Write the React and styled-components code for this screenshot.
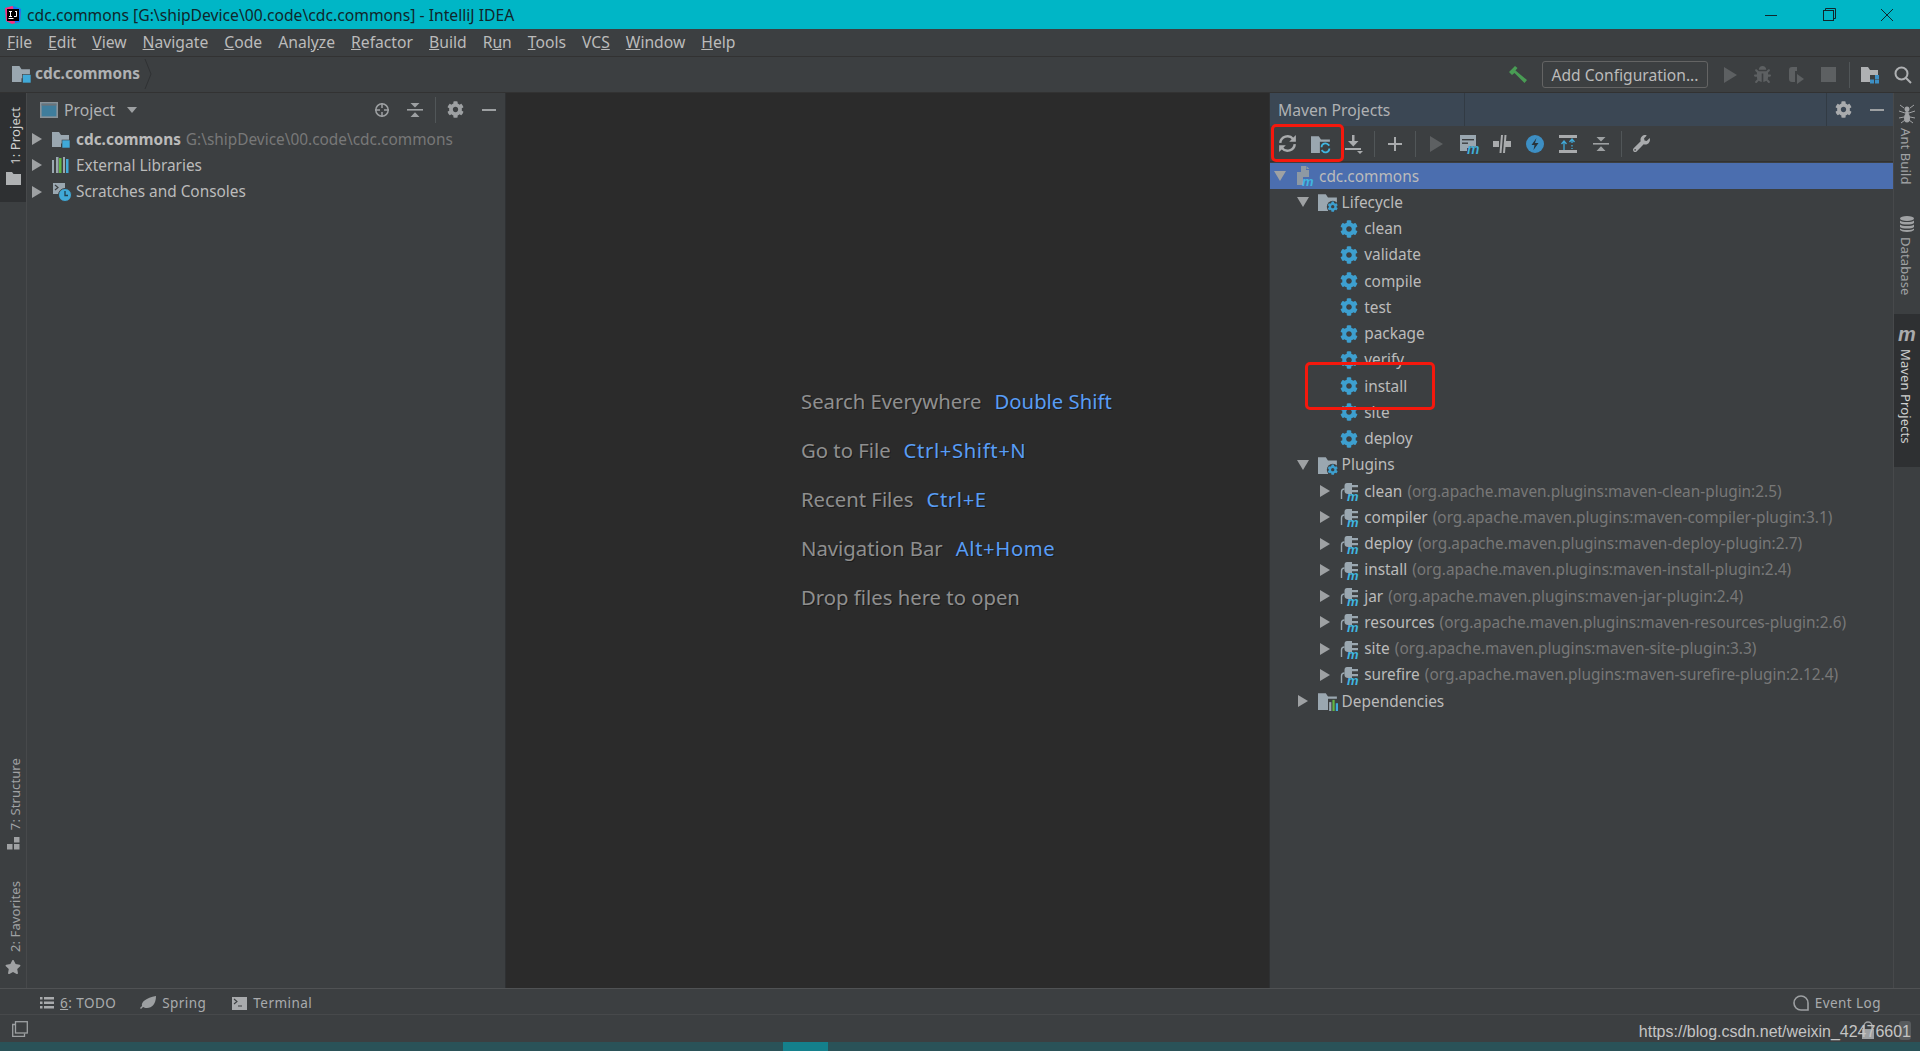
import React from "react";
import styled, { createGlobalStyle } from "styled-components";
import { FaCog, FaWrench, FaBug, FaStar } from "react-icons/fa";

const GlobalStyle = createGlobalStyle`
  html, body { margin: 0; height: 100%; background: #3c3f41; }
  #root { height: 100%; }
  * { box-sizing: border-box; }
  svg { overflow: visible; }
`

const Page = styled.div`
  height: 100vh;
  display: flex;
  flex-direction: column;
  overflow: hidden;
  background: #3c3f41;
  color: #bbbbbb;
  font-family: "Noto Sans", "Open Sans", sans-serif;
  font-size: 15px;
`
const TitleBar = styled.div`
  height: 29px;
  flex: none;
  display: flex;
  align-items: center;
  background: #00b6c6;
  color: #10272c;
  font-size: 15.7px;
  padding-left: 4px;
  gap: 5px;
`
const WindowControls = styled.div`
  margin-left: auto;
  display: flex;
  align-items: center;
  margin-right: 4px;
`
const WindowButton = styled.div`
  width: 58px;
  height: 29px;
  display: flex;
  align-items: center;
  justify-content: center;
`
const MenuBar = styled.div`
  height: 28px;
  flex: none;
  display: flex;
  align-items: center;
  gap: 16px;
  padding: 0 0 1px 7px;
  border-bottom: 1px solid #323232;
  font-size: 15.7px;
`
const NavBar = styled.div`
  height: 36px;
  flex: none;
  display: flex;
  align-items: center;
  padding: 0 1px 0 12px;
  border-bottom: 1px solid #323232;
`
const Crumb = styled.div`
  display: flex;
  align-items: center;
  gap: 4px;
  font-weight: 700;
  font-size: 15.4px;
  color: #afb1b3;
  margin-top: -2px;
`
const NavTools = styled.div`
  margin-left: auto;
  display: flex;
  align-items: center;
`
const RunConfig = styled.div`
  width: 166px;
  height: 27px;
  margin: 0 5px 0 8px;
  border: 1px solid #646464;
  border-radius: 3px;
  display: flex;
  align-items: center;
  justify-content: center;
  font-size: 15.6px;
  color: #bbbbbb;
`
const Slot = styled.div`
  width: ${p => p.$w || 33}px;
  height: 26px;
  flex: none;
  display: flex;
  align-items: center;
  justify-content: center;
`
const Divider = styled.div`
  width: 8px;
  height: 26px;
  flex: none;
  display: flex;
  justify-content: center;
  &::before {
    content: "";
    width: 1px;
    background: #515658;
  }
`
const Main = styled.div`
  flex: 1;
  min-height: 0;
  display: flex;
`
const Stripe = styled.div`
  width: 27px;
  flex: none;
  display: flex;
  flex-direction: column;
  ${p => p.$left ? "border-right: 1px solid #47494b; padding-left: 0;" : "border-left: 1px solid #47494b;"}
`
const StripeTab = styled.div`
  display: flex;
  flex-direction: column;
  align-items: center;
  gap: ${p => p.$gap || 7}px;
  padding: ${p => p.$pad || "0"};
  margin-top: ${p => p.$mt || 0}px;
  height: ${p => p.$h ? p.$h + "px" : "auto"};
  background: ${p => p.$active ? "#2e3032" : "transparent"};
  color: ${p => p.$active ? "#d0d0d0" : "#a0a2a4"};
  font-size: 13px;
  letter-spacing: 0.1px;
`
const StripeLabel = styled.span`
  writing-mode: vertical-rl;
  transform: ${p => p.$up ? "rotate(180deg) translateX(-2px)" : "translateX(-2px)"};
  white-space: nowrap;
  line-height: 1;
`
const StripeBottom = styled.div`
  margin-top: auto;
  display: flex;
  flex-direction: column;
  padding-bottom: 13px;
`
const ProjectPanel = styled.div`
  width: 479px;
  flex: none;
  display: flex;
  flex-direction: column;
  border-right: 1px solid #2f3133;
`
const PanelHeader = styled.div`
  height: 33px;
  flex: none;
  display: flex;
  align-items: center;
  padding-left: ${p => p.$pad || 13}px;
  background: ${p => p.$active ? "#3b4754" : "transparent"};
`
const PanelTitle = styled.span`
  font-size: 15.7px;
  margin-left: ${p => p.$ml || 0}px;
  color: #afb1b3;
`
const DropArrow = styled.svg`
  margin-left: 12px;
`
const PanelTools = styled.div`
  margin-left: auto;
  display: flex;
  align-items: center;
`
const Editor = styled.div`
  flex: 1;
  background: #2b2b2b;
  padding: 284px 0 0 295px;
  font-size: 20.3px;
  color: #8f8f8f;
  text-shadow: 1px 1px 0 #1c1c1c;
`
const HintRow = styled.div`
  height: 48.8px;
  display: flex;
  align-items: center;
  gap: 13px;
`
const Shortcut = styled.span`
  color: #589df6;
  letter-spacing: ${p => p.$wide ? "0.6px" : "0"};
`
const MavenPanel = styled.div`
  width: 624px;
  flex: none;
  display: flex;
  flex-direction: column;
  position: relative;
  border-left: 1px solid #2f3133;
`
const TitleTab = styled.div`
  height: 33px;
  width: 187px;
  display: flex;
  align-items: center;
  border-right: 1px solid #323b44;
`
const HeaderTools = styled.div`
  margin-left: auto;
  height: 33px;
  display: flex;
  align-items: center;
  border-left: 1px solid #323b44;
`
const MavenToolbar = styled.div`
  height: 36px;
  flex: none;
  display: flex;
  align-items: center;
  padding-left: 1px;
  border-bottom: 1px solid #323232;
`
const Tree = styled.div`
  flex: 1;
  padding-top: ${p => p.$top || 0}px;
`
const TreeRow = styled.div`
  height: 26.25px;
  display: flex;
  align-items: center;
  padding-left: ${p => p.$level * 22.6 + 3}px;
  background: ${p => p.$selected ? "#4b6eaf" : "transparent"};
  white-space: nowrap;
  font-size: 15.4px;
  color: #bbbbbb;
`
const ArrowSlot = styled.div`
  width: 22px;
  flex: none;
  display: flex;
  align-items: center;
  padding-left: 1px;
`
const IconSlot = styled.div`
  width: 24px;
  flex: none;
  display: flex;
  align-items: center;
`
const Strong = styled.b`
  color: #bbbbbb;
  font-weight: 700;
`
const Muted = styled.span`
  color: #787878;
  margin-left: ${p => p.$ml || 5}px;
`
const RedFrame = styled.div`
  position: absolute;
  left: ${p => p.$x}px;
  top: ${p => p.$y}px;
  width: ${p => p.$w}px;
  height: ${p => p.$h}px;
  border: 3px solid #f5180d;
  border-radius: 5px;
  pointer-events: none;
`
const ToolStrip = styled.div`
  height: 27px;
  flex: none;
  display: flex;
  align-items: center;
  padding: 3px 39px 0 40px;
  border-top: 1px solid #505254;
  border-bottom: 1px solid #47494b;
  font-size: 13.5px;
  letter-spacing: 0.45px;
  color: #a9abad;
`
const ToolButton = styled.div`
  display: flex;
  align-items: center;
  gap: 6px;
  margin-right: ${p => p.$mr || 0}px;
  margin-left: ${p => p.$auto ? "auto" : "0"};
`
const StatusBar = styled.div`
  height: 27px;
  flex: none;
  display: flex;
  align-items: center;
  padding: 0 9px 0 12px;
  position: relative;
`
const Watermark = styled.span`
  margin-left: auto;
  padding-top: 6px;
  font-family: "Liberation Sans", Arial, sans-serif;
  font-size: 16px;
  color: #c4c4c4;
  position: relative;
`
const LockBadge = styled.svg`
  position: absolute;
  right: 44px;
  top: 6px;
`
const MemoryBadge = styled.div`
  position: absolute;
  right: 9px;
  top: 6px;
  width: 12px;
  height: 19px;
  border-radius: 3px;
  background: #585b5d;
`
const BottomEdge = styled.div`
  height: 9px;
  flex: none;
  background: #2a5258;
  display: flex;
  padding-left: 783px;
`
const BottomAccent = styled.div`
  width: 45px;
  background: #14808c;
`
const MavenLetter = styled.span`
  font-family: "Liberation Sans", sans-serif;
  font-style: italic;
  font-weight: 700;
  font-size: 20px;
  line-height: 14px;
  color: #a9abad;
`

const FolderIcon = ({ badge, size = 18 }) => (
  <svg width={size} height={size} viewBox="0 0 18 18">
    <path d="M0 2h7l2 3h8v8.500H9V17H0z" fill="#9aa7b0" />
    {badge === "square" && <rect x="10" y="10" width="8" height="8" fill="#40a9d8" stroke="#3c3f41" strokeWidth="0.6" />}
    {badge === "gear" && <g transform="translate(8.500 8.500)"><circle cx="4.750" cy="4.750" r="5.300" fill="#3c3f41" /><FaCog size={9.500} color="#3d9fcf" /></g>}
    {badge === "bars" && (
      <g>
        <rect x="9" y="7" width="9" height="11" fill="#3c3f41" />
        <rect x="10" y="10" width="2" height="8" fill="#9aa7b0" />
        <rect x="13" y="8" width="2" height="10" fill="#62b543" />
        <rect x="16" y="11" width="2" height="7" fill="#40a9d8" />
      </g>
    )}
    {badge === "refresh" && (
      <g fill="none" stroke="#40b6e0" strokeWidth="1.600">
        <rect x="8" y="7" width="10" height="11" fill="#3c3f41" stroke="none" />
        <path d="M9.500 12a3.500 3.500 0 0 1 6-2.500l1 1" />
        <path d="M16.500 13a3.500 3.500 0 0 1-6 2.500l-1-1" />
      </g>
    )}
  </svg>
);

const LogoIcon = () => (
  <svg width="18" height="18" viewBox="0 0 18 18">
    <path d="M1 2l7-2 9 3-1 13-8 2-6-3z" fill="#f5317f" />
    <path d="M9 0l8 3-1 13-5 1z" fill="#087cfa" />
    <rect x="3" y="3" width="12" height="12" fill="#000" />
    <rect x="4.500" y="12" width="5" height="1" fill="#fff" />
    <path d="M5 5h3v1H7v4h1v1H5v-1h1V6H5zM11 5h2v5c0 1-1 1-2 1h-1v-1h2V6h-1z" fill="#fff" />
  </svg>
);

const Triangle = ({ open }) => (
  <svg width="12" height="12" viewBox="0 0 12 12">
    <path d={open ? "M0 1h12L6 11z" : "M1 0l10 6-10 6z"} fill="#9ea1a3" />
  </svg>
);

const MavenFileIcon = () => (
  <svg width="20" height="20" viewBox="0 0 20 20">
    <path d="M2 6h4v-6h5v4h3v7H8v8H2z" fill="#8d99a3" />
    <path d="M11.500 0l3 3h-3z" fill="#8d99a3" />
    <text x="7" y="19.500" fontSize="13" fontStyle="italic" fontWeight="700" fill="#40b6e0" fontFamily="Liberation Sans">m</text>
  </svg>
);

const PluginIcon = () => (
  <svg width="20" height="20" viewBox="0 0 20 20">
    <path d="M1.500 18v-7c0-2 1-3 3-3" fill="none" stroke="#9aa7b0" strokeWidth="1.400" />
    <path d="M7 2h5v2h6v2.200h-6V9h6v2.200h-6V13H8c-2 0-3.500-1-3.500-3V5c0-2 1-3 2.500-3z" fill="#9aa7b0" />
    <text x="7" y="19.500" fontSize="13" fontStyle="italic" fontWeight="700" fill="#40b6e0" fontFamily="Liberation Sans">m</text>
  </svg>
);

const LibrariesIcon = () => (
  <svg width="18" height="18" viewBox="0 0 18 18">
    <rect x="0" y="4" width="2" height="13" fill="#9aa7b0" />
    <rect x="4" y="1" width="2.500" height="16" fill="#9aa7b0" />
    <rect x="7" y="2" width="2.500" height="15" fill="#62b543" />
    <rect x="11" y="1" width="2" height="16" fill="#9aa7b0" />
    <rect x="14" y="3" width="2.500" height="14" fill="#40a9d8" />
  </svg>
);

const ScratchIcon = () => (
  <svg width="20" height="20" viewBox="0 0 20 20">
    <rect x="1" y="1" width="12" height="11" fill="#9aa7b0" />
    <path d="M3 3l3 2.500L3 8" fill="none" stroke="#3c3f41" strokeWidth="1.200" />
    <circle cx="13" cy="13" r="6.500" fill="#40a9d8" stroke="#3c3f41" />
    <path d="M13 9v4.500h3" fill="none" stroke="#20404e" strokeWidth="1.300" />
  </svg>
);

const ProjectWindowIcon = () => (
  <svg width="18" height="16" viewBox="0 0 18 16">
    <rect x="0.800" y="0.800" width="16.400" height="14.400" fill="#3f7d9c" stroke="#8a9298" strokeWidth="1.600" />
    <rect x="1.600" y="1.600" width="14.800" height="2" fill="#6c7378" />
  </svg>
);

const TargetIcon = () => (
  <svg width="16" height="16" viewBox="0 0 16 16" fill="none" stroke="#9da0a2" strokeWidth="1.500">
    <circle cx="8" cy="8" r="6.200" />
    <path d="M8 1v5M8 10v5M1 8h5M10 8h5" />
  </svg>
);

const CollapseIcon = () => (
  <svg width="16" height="16" viewBox="0 0 16 16" fill="#9da0a2">
    <rect x="0" y="7" width="16" height="1.600" />
    <path d="M3.500 1h9L8 5.500zM8 10.200l4.500 4.800h-9z" />
  </svg>
);

const MinusIcon = () => (
  <svg width="16" height="16" viewBox="0 0 16 16"><rect x="1" y="7" width="14" height="2" fill="#9da0a2" /></svg>
);

const HammerIcon = () => (
  <svg width="20" height="20" viewBox="0 0 20 20">
    <path d="M1 7l6-6 2.500 2-2 2.500L19 15l-2.500 3-10-10L4 10z" fill="#499c54" />
  </svg>
);

const RunIcon = () => (
  <svg width="16" height="18" viewBox="0 0 16 18"><path d="M2 1l13 8-13 8z" fill="#5d6062" /></svg>
);

const CoverageIcon = () => (
  <svg width="20" height="20" viewBox="0 0 20 20">
    <path d="M11 2H6C4 2 3 3 3 5v9c0 2 1 3 3 3h3V6h2z" fill="#5d6062" />
    <path d="M11 9l7 5-7 5z" fill="#5d6062" />
  </svg>
);

const StopIcon = () => (
  <svg width="15" height="15" viewBox="0 0 15 15"><rect width="15" height="15" fill="#5d6062" /></svg>
);

const StructureIcon = () => (
  <svg width="20" height="18" viewBox="0 0 20 18">
    <path d="M1 1h7l2 3h8v5h-8v7H1z" fill="#afb1b3" />
    <rect x="15" y="9" width="4" height="4" fill="#3d8fc4" />
    <rect x="10" y="13.500" width="4" height="4" fill="#3d8fc4" />
    <rect x="15" y="13.500" width="4" height="4" fill="#3d8fc4" />
  </svg>
);

const SearchIcon = () => (
  <svg width="18" height="18" viewBox="0 0 18 18" fill="none" stroke="#afb1b3" strokeWidth="2">
    <circle cx="7.500" cy="7.500" r="6" />
    <path d="M12 12l5 5" />
  </svg>
);

const RefreshIcon = () => (
  <svg width="19" height="19" viewBox="0 0 17 17" fill="none" stroke="#a9abad" strokeWidth="2.200">
    <path d="M2 8a6.500 6.500 0 0 1 11.500-3.500" />
    <path d="M15 9a6.500 6.500 0 0 1-11.500 3.500" />
    <path d="M10 7h6V1z" stroke="none" fill="#a9abad" />
    <path d="M7 10H1v6z" stroke="none" fill="#a9abad" />
  </svg>
);

const DownloadIcon = () => (
  <svg width="20" height="20" viewBox="0 0 20 20">
    <rect x="8" y="1" width="2.500" height="8" fill="#a9abad" />
    <path d="M4 7h10.500l-5.200 5.500z" fill="#a9abad" />
    <rect x="1" y="14" width="16" height="2" fill="#a9abad" />
    <path d="M13 17h6l-3 3z" fill="#a9abad" />
  </svg>
);

const PlusIcon = () => (
  <svg width="14" height="14" viewBox="0 0 14 14"><path d="M6 0h2v6h6v2H8v6H6V8H0V6h6z" fill="#a9abad" /></svg>
);

const GoalIcon = () => (
  <svg width="20" height="20" viewBox="0 0 20 20">
    <path d="M1 1h16v13H8v3H1z" fill="#9aa7b0" />
    <rect x="3" y="5" width="12" height="1.400" fill="#3c3f41" />
    <rect x="3" y="8.500" width="6" height="1.400" fill="#3c3f41" />
    <text x="8" y="19.500" fontSize="14" fontStyle="italic" fontWeight="700" fill="#40b6e0" fontFamily="Liberation Sans" stroke="#3c3f41" strokeWidth="0.200">m</text>
  </svg>
);

const OfflineIcon = () => (
  <svg width="20" height="18" viewBox="0 0 20 18" fill="#a9abad">
    <rect x="1" y="6" width="6" height="6" />
    <rect x="13" y="6" width="6" height="6" />
    <path d="M9 0h2L9.500 18h-2zM12.500 0h2L13 18h-2z" />
  </svg>
);

const BoltIcon = () => (
  <svg width="18" height="18" viewBox="0 0 18 18">
    <circle cx="9" cy="9" r="9" fill="#3d8fc4" />
    <path d="M10.500 3L5.500 10h3l-1 5 5-7H9z" fill="#27343d" />
  </svg>
);

const GenerateIcon = () => (
  <svg width="18" height="18" viewBox="0 0 18 18">
    <rect x="0" y="0" width="18" height="3" fill="#a9abad" />
    <rect x="0" y="15" width="18" height="3" fill="#a9abad" />
    <path d="M5 15V7M2.500 9L5 6l2.500 3" fill="none" stroke="#40a9d8" strokeWidth="1.300" />
    <path d="M13 8V5M10.500 7L13 4l2.500 3M13 10v1.500M13 13v1" fill="none" stroke="#40a9d8" strokeWidth="1.300" />
  </svg>
);

const StructureSquares = () => (
  <svg width="13" height="13" viewBox="0 0 13 13" fill="#a0a2a4">
    <rect x="7" y="0" width="5.500" height="5.500" />
    <rect x="0" y="7" width="5.500" height="5.500" />
    <rect x="7" y="7" width="5.500" height="5.500" />
  </svg>
);

const StripeFolder = () => (
  <svg width="15" height="13" viewBox="0 0 15 13"><path d="M0 0h6l1.500 2H15v11H0z" fill="#afb1b3" /></svg>
);

const AntIcon = () => (
  <svg width="18" height="18" viewBox="0 0 18 18" fill="#a0a2a4">
    <circle cx="9" cy="4" r="2.500" />
    <ellipse cx="9" cy="8" rx="2" ry="2" />
    <ellipse cx="9" cy="13" rx="3" ry="4.500" />
    <path d="M6 3L2 0M12 3l4-3M7 8L1 6M11 8l6-2M6 12l-5 1M12 12l5 1M7 15l-4 3M11 15l4 3" stroke="#a0a2a4" strokeWidth="1" />
  </svg>
);

const DatabaseIcon = () => (
  <svg width="14" height="16" viewBox="0 0 14 16" fill="#a0a2a4">
    <ellipse cx="7" cy="2.500" rx="7" ry="2.500" />
    <path d="M0 4.500c2 2 12 2 14 0V7c-2 2-12 2-14 0zM0 8.500c2 2 12 2 14 0V11c-2 2-12 2-14 0zM0 12.500c2 2 12 2 14 0V14c-2 2.500-12 2.500-14 0z" />
  </svg>
);

const TodoIcon = () => (
  <svg width="14" height="12" viewBox="0 0 14 12" fill="#a9abad">
    <rect x="0" y="0" width="2.500" height="2.500" /><rect x="4" y="0" width="10" height="2.500" />
    <rect x="0" y="4.500" width="2.500" height="2.500" /><rect x="4" y="4.500" width="10" height="2.500" />
    <rect x="0" y="9" width="2.500" height="2.500" /><rect x="4" y="9" width="10" height="2.500" />
  </svg>
);

const LeafIcon = () => (
  <svg width="16" height="14" viewBox="0 0 16 14">
    <path d="M16 0c0 8-4 12-9 12-2 0-3-.5-4-1l-2 2-1-1 2-2C1 6 6 2 16 0z" fill="#9da0a2" />
  </svg>
);

const TerminalIcon = () => (
  <svg width="15" height="13" viewBox="0 0 15 13">
    <rect width="15" height="13" fill="#a9abad" />
    <path d="M2 2l3 2.500L2 7M6 9h4" fill="none" stroke="#3c3f41" strokeWidth="1.100" />
  </svg>
);

const EventIcon = () => (
  <svg width="16" height="16" viewBox="0 0 16 16">
    <path d="M15 15H8a7 7 0 1 1 7-7z" fill="none" stroke="#9da0a2" strokeWidth="1.600" />
  </svg>
);

const FramesIcon = () => (
  <svg width="16" height="16" viewBox="0 0 16 16" fill="none" stroke="#9da0a2" strokeWidth="1.300">
    <rect x="3.500" y="0.700" width="11.800" height="11.300" />
    <path d="M3 3.500H0.700V15.300H12.500V12.500" />
  </svg>
);

const menu = [
  ["", "F", "ile"], ["", "E", "dit"], ["", "V", "iew"], ["", "N", "avigate"], ["", "C", "ode"],
  ["Anal", "y", "ze"], ["", "R", "efactor"], ["", "B", "uild"], ["R", "u", "n"], ["", "T", "ools"],
  ["VC", "S", ""], ["", "W", "indow"], ["", "H", "elp"],
];

const lifecycle = ["clean", "validate", "compile", "test", "package", "verify", "install", "site", "deploy"];

const plugins = [
  ["clean", "maven-clean-plugin:2.5"],
  ["compiler", "maven-compiler-plugin:3.1"],
  ["deploy", "maven-deploy-plugin:2.7"],
  ["install", "maven-install-plugin:2.4"],
  ["jar", "maven-jar-plugin:2.4"],
  ["resources", "maven-resources-plugin:2.6"],
  ["site", "maven-site-plugin:3.3"],
  ["surefire", "maven-surefire-plugin:2.12.4"],
];

const hints = [
  ["Search Everywhere", "Double Shift"],
  ["Go to File", "Ctrl+Shift+N"],
  ["Recent Files", "Ctrl+E"],
  ["Navigation Bar", "Alt+Home"],
  ["Drop files here to open", ""],
];

function Row({ level, open, leaf, icon, selected, children }) {
  return (
    <TreeRow $level={level} $selected={selected}>
      <ArrowSlot>{!leaf && <Triangle open={open} />}</ArrowSlot>
      <IconSlot>{icon}</IconSlot>
      <span>{children}</span>
    </TreeRow>
  );
}

export default function App() {
  return (
    <Page>
      <GlobalStyle />
      <TitleBar>
        <LogoIcon />
        <span>cdc.commons [G:\shipDevice\00.code\cdc.commons] - IntelliJ IDEA</span>
        <WindowControls>
          <WindowButton>
            <svg width="12" height="12" viewBox="0 0 12 12"><rect y="6" width="12" height="1" fill="#10272c" /></svg>
          </WindowButton>
          <WindowButton>
            <svg width="13" height="13" viewBox="0 0 13 13" fill="none" stroke="#10272c"><rect x="0.500" y="2.500" width="10" height="10" /><path d="M2.500 2.500v-2h10v10h-2" /></svg>
          </WindowButton>
          <WindowButton>
            <svg width="14" height="14" viewBox="0 0 14 14" stroke="#10272c"><path d="M1 1l12 12M13 1L1 13" /></svg>
          </WindowButton>
        </WindowControls>
      </TitleBar>

      <MenuBar>
        {menu.map(([a, k, b]) => (
          <span key={a + k + b}>{a}<u>{k}</u>{b}</span>
        ))}
      </MenuBar>

      <NavBar>
        <Crumb>
          <FolderIcon badge="square" size={19} />
          cdc.commons
          <svg width="8" height="30" viewBox="0 0 8 30" fill="none" stroke="#2f3133"><path d="M1 0l6 15-6 15" /></svg>
        </Crumb>
        <NavTools>
          <Slot><HammerIcon /></Slot>
          <RunConfig>Add Configuration...</RunConfig>
          <Slot><RunIcon /></Slot>
          <Slot><FaBug size={17} color="#5d6062" /></Slot>
          <Slot><CoverageIcon /></Slot>
          <Slot><StopIcon /></Slot>
          <Divider />
          <Slot><StructureIcon /></Slot>
          <Slot><SearchIcon /></Slot>
        </NavTools>
      </NavBar>

      <Main>
        <Stripe $left>
          <StripeTab $active $h={109} $pad="14px 0 0">
            <StripeLabel $up>1: Project</StripeLabel>
            <StripeFolder />
          </StripeTab>
          <StripeBottom>
            <StripeTab>
              <StripeLabel $up>7: Structure</StripeLabel>
              <StructureSquares />
            </StripeTab>
            <StripeTab $mt={31}>
              <StripeLabel $up>2: Favorites</StripeLabel>
              <FaStar size={16} color="#a0a2a4" />
            </StripeTab>
          </StripeBottom>
        </Stripe>

        <ProjectPanel>
          <PanelHeader>
            <ProjectWindowIcon />
            <PanelTitle $ml={6}>Project</PanelTitle>
            <DropArrow width="10" height="6" viewBox="0 0 10 6"><path d="M0 0h10L5 6z" fill="#9da0a2" /></DropArrow>
            <PanelTools>
              <Slot><TargetIcon /></Slot>
              <Slot><CollapseIcon /></Slot>
              <Divider />
              <Slot><FaCog size={17} color="#9da0a2" /></Slot>
              <Slot><MinusIcon /></Slot>
            </PanelTools>
          </PanelHeader>
          <Tree>
            <Row level={0} icon={<FolderIcon badge="square" />}>
              <Strong>cdc.commons</Strong><Muted>G:\shipDevice\00.code\cdc.commons</Muted>
            </Row>
            <Row level={0} icon={<LibrariesIcon />}>External Libraries</Row>
            <Row level={0} icon={<ScratchIcon />}>Scratches and Consoles</Row>
          </Tree>
        </ProjectPanel>

        <Editor>
          {hints.map(([text, keys]) => (
            <HintRow key={text}>
              <span>{text}</span>
              {keys && <Shortcut $wide={keys.includes("+")}>{keys}</Shortcut>}
            </HintRow>
          ))}
        </Editor>

        <MavenPanel>
          <PanelHeader $active $pad={8}>
            <TitleTab>
              <PanelTitle>Maven Projects</PanelTitle>
            </TitleTab>
            <HeaderTools>
              <Slot><FaCog size={17} color="#a9abad" /></Slot>
              <Slot><MinusIcon /></Slot>
            </HeaderTools>
          </PanelHeader>
          <MavenToolbar>
            <Slot><RefreshIcon /></Slot>
            <Slot><FolderIcon badge="refresh" size={20} /></Slot>
            <Slot><DownloadIcon /></Slot>
            <Divider />
            <Slot><PlusIcon /></Slot>
            <Divider />
            <Slot><RunIcon /></Slot>
            <Slot><GoalIcon /></Slot>
            <Slot><OfflineIcon /></Slot>
            <Slot><BoltIcon /></Slot>
            <Slot><GenerateIcon /></Slot>
            <Slot><CollapseIcon /></Slot>
            <Divider />
            <Slot><FaWrench size={17} color="#a9abad" /></Slot>
          </MavenToolbar>
          <Tree $top={1}>
            <Row level={0} open selected icon={<MavenFileIcon />}>cdc.commons</Row>
            <Row level={1} open icon={<FolderIcon badge="gear" size={20} />}>Lifecycle</Row>
            {lifecycle.map(name => (
              <Row key={name} level={2} leaf icon={<FaCog size={18} color="#3d9fcf" />}>{name}</Row>
            ))}
            <Row level={1} open icon={<FolderIcon badge="gear" size={20} />}>Plugins</Row>
            {plugins.map(([name, id]) => (
              <Row key={name} level={2} icon={<PluginIcon />}>
                {name}<Muted>(org.apache.maven.plugins:{id})</Muted>
              </Row>
            ))}
            <Row level={1} icon={<FolderIcon badge="bars" size={20} />}>Dependencies</Row>
          </Tree>
          <RedFrame $x={1} $y={31} $w={73} $h={38} />
          <RedFrame $x={35} $y={269} $w={130} $h={48} />
        </MavenPanel>

        <Stripe>
          <StripeTab $pad="12px 0 0" $gap={5}>
            <AntIcon />
            <StripeLabel>Ant Build</StripeLabel>
          </StripeTab>
          <StripeTab $mt={31} $gap={5}>
            <DatabaseIcon />
            <StripeLabel>Database</StripeLabel>
          </StripeTab>
          <StripeTab $active $mt={19} $h={153} $pad="13px 0 0" $gap={8}>
            <MavenLetter>m</MavenLetter>
            <StripeLabel>Maven Projects</StripeLabel>
          </StripeTab>
        </Stripe>
      </Main>

      <ToolStrip>
        <ToolButton $mr={24}><TodoIcon /><span><u>6</u>: TODO</span></ToolButton>
        <ToolButton $mr={26}><LeafIcon /><span>Spring</span></ToolButton>
        <ToolButton><TerminalIcon /><span>Terminal</span></ToolButton>
        <ToolButton $auto><EventIcon /><span>Event Log</span></ToolButton>
      </ToolStrip>

      <StatusBar>
        <FramesIcon />
        <LockBadge width="16" height="19" viewBox="0 0 16 19">
          <path d="M4 8V5a4 4 0 0 1 8 0v3" fill="none" stroke="#9da0a2" strokeWidth="1.500" />
          <rect x="2" y="8" width="12" height="10" fill="#9da0a2" />
        </LockBadge>
        <MemoryBadge />
        <Watermark>https://blog.csdn.net/weixin_42476601</Watermark>
      </StatusBar>
      <BottomEdge><BottomAccent /></BottomEdge>
    </Page>
  );
}
